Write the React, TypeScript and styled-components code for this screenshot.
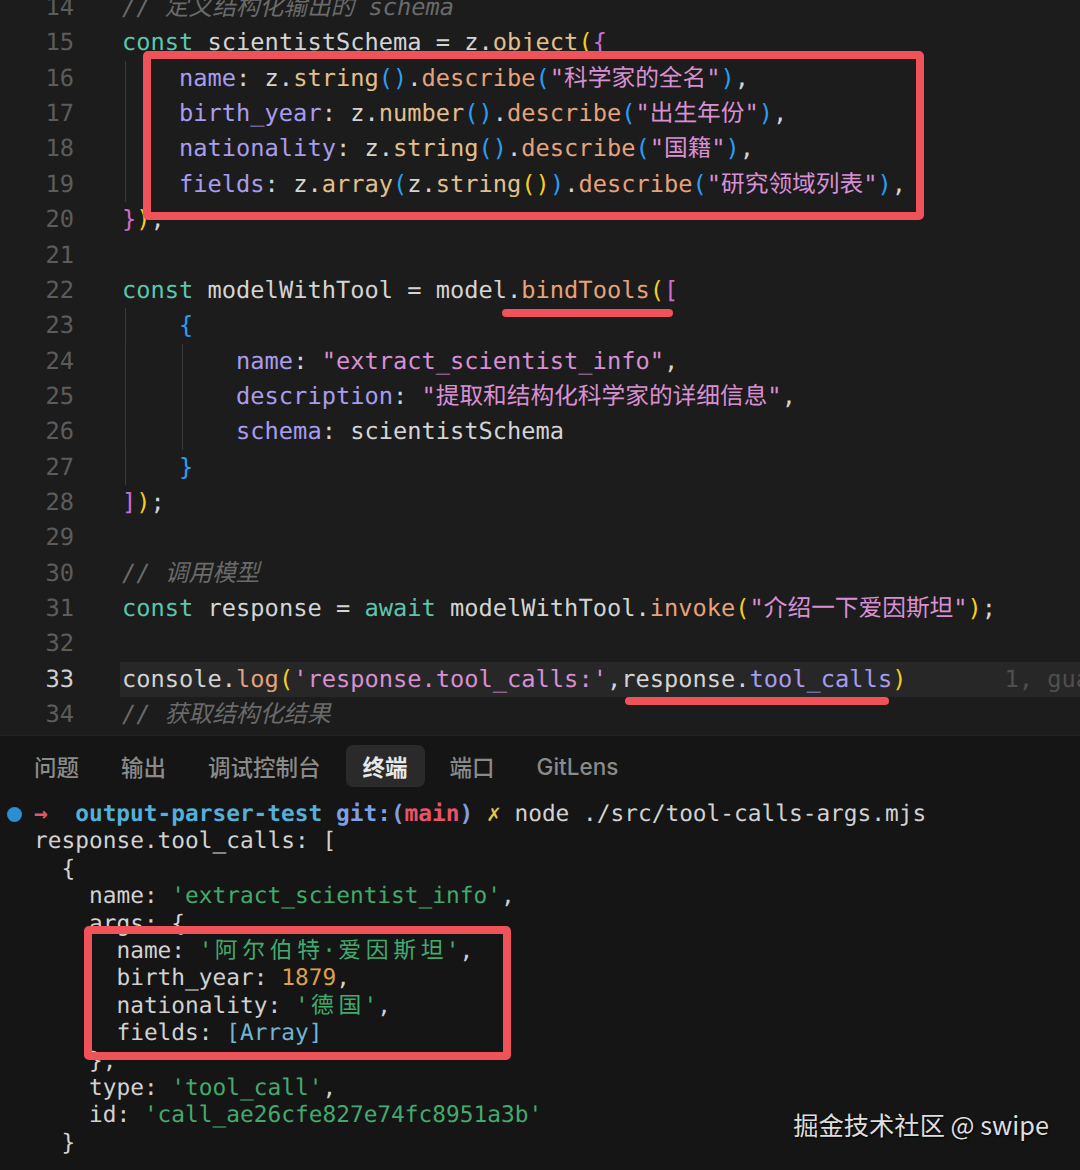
import React from "react";
import styled, { createGlobalStyle } from "styled-components";

const GlobalStyle = createGlobalStyle`
  html, body {
    margin: 0;
    padding: 0;
    background: #151515;
  }
`;

const palette: Record<string, string> = {
  kw: "#5cc6ad",
  pl: "#d4d4d4",
  pr: "#a89cee",
  fy: "#e2c08c",
  fo: "#e6a27b",
  st: "#d98fd3",
  cm: "#6a6a6a",
  y: "#f5cf1d",
  m: "#cf6bd0",
  b: "#289ff5",
  tx: "#d2d2d2",
  gr: "#43aa6d",
  nu: "#dda04b",
  cy: "#72b5d4",
  cyb: "#55afd6",
  bl: "#7e9fe4",
  rd: "#e5556a",
  ye: "#e3c44c",
};

const Screen = styled.div`
  position: relative;
  width: 1080px;
  height: 1170px;
  overflow: hidden;
  display: flex;
  flex-direction: column;
  background: #151515;
`;

const Editor = styled.div`
  flex: none;
  height: 735px;
  overflow: hidden;
  background: #1c1c1c;
  font-family: "DejaVu Sans Mono", "Noto Sans CJK SC", monospace;
  font-size: 23.7px;
  text-rendering: geometricPrecision;
`;

const Lines = styled.div`
  margin-top: -10px;
`;

const Row = styled.div`
  display: flex;
  height: 35.37px;
  line-height: 35.37px;
  white-space: pre;
`;

const LineNo = styled.span<{ $active?: boolean }>`
  flex: none;
  width: 74px;
  text-align: right;
  color: ${(p) => (p.$active ? "#cfcfcf" : "#5c5c5c")};
`;

const Code = styled.div<{ $active?: boolean }>`
  flex: 1;
  margin-left: 46px;
  padding-left: 2px;
  overflow: hidden;
  background: ${(p) => (p.$active ? "#272727" : "transparent")};
`;

const Indent = styled.span<{ $level: number }>`
  display: inline-block;
  vertical-align: top;
  width: ${(p) => p.$level * 4}ch;
  height: 100%;
  background-image: linear-gradient(
    to right,
    transparent 3px,
    #3a3a3a 3px,
    #3a3a3a 4px,
    transparent 4px
  );
  background-size: 4ch 100%;
  background-repeat: repeat-x;
`;

const Tok = styled.span<{ $c: string; $i?: boolean; $b?: boolean }>`
  color: ${(p) => palette[p.$c]};
  font-style: ${(p) => (p.$i ? "italic" : "normal")};
  font-weight: ${(p) => (p.$b ? 700 : 400)};
`;

const Ghost = styled.span`
  margin-left: 98px;
  color: #4f4f4f;
`;

const Panel = styled.div`
  flex: 1;
  display: flex;
  flex-direction: column;
  background: #151515;
  border-top: 1px solid #222;
`;

const TabBar = styled.div`
  display: flex;
  gap: 8px;
  padding: 9px 0 0 17px;
  font-family: Inter, "Noto Sans CJK SC", sans-serif;
  font-size: 22.5px;
`;

const Tab = styled.div<{ $active?: boolean }>`
  height: 42px;
  display: flex;
  align-items: center;
  padding: 0 17px;
  border-radius: 7px;
  color: ${(p) => (p.$active ? "#e8e8e8" : "#8a8a8a")};
  font-weight: ${(p) => (p.$active ? 600 : 500)};
  background: ${(p) => (p.$active ? "#2a2a2a" : "transparent")};
`;

const Term = styled.div`
  padding-top: 14px;
  font-family: "DejaVu Sans Mono", "Noto Sans CJK SC", monospace;
  font-size: 22.8px;
  color: #d2d2d2;
  text-rendering: geometricPrecision;
`;

const TermRow = styled.div`
  display: flex;
  align-items: center;
  height: 27.4px;
  line-height: 27.4px;
  white-space: pre;
`;

const Mark = styled.span`
  flex: none;
  width: 34px;
  display: flex;
  align-items: center;
`;

const Dot = styled.span`
  width: 15px;
  height: 15px;
  margin-left: 7px;
  border-radius: 50%;
  background: #2d8dd2;
`;

const Wide = styled.span`
  display: inline-block;
  width: 2ch;
  text-align: center;
`;

const Frame = styled.div<{ $x: number; $y: number; $w: number; $h: number }>`
  position: absolute;
  left: ${(p) => p.$x}px;
  top: ${(p) => p.$y}px;
  width: ${(p) => p.$w}px;
  height: ${(p) => p.$h}px;
  box-sizing: border-box;
  border: 8px solid #ef5359;
  border-radius: 5px;
  pointer-events: none;
`;

const Stroke = styled.div<{ $x: number; $y: number; $w: number }>`
  position: absolute;
  left: ${(p) => p.$x}px;
  top: ${(p) => p.$y}px;
  width: ${(p) => p.$w}px;
  height: 8px;
  border-radius: 4px;
  background: #ef5359;
`;

const Watermark = styled.div`
  position: absolute;
  right: 31px;
  top: 1107px;
  font-family: "Noto Sans CJK SC", sans-serif;
  font-size: 25.3px;
  line-height: 34px;
  color: #dedede;
  text-shadow: 1px 1px 2px rgba(0, 0, 0, 0.9);
`;

type T = [string, string];
type Line = { n: number; ind?: number; t: T[]; active?: boolean; ghost?: string };

const code: Line[] = [
  { n: 14, t: [["// 定义结构化输出的 schema", "cm"]] },
  { n: 15, t: [["const", "kw"], [" scientistSchema = z.", "pl"], ["object", "fy"], ["(", "y"], ["{", "m"]] },
  {
    n: 16, ind: 1,
    t: [["name", "pr"], [": z.", "pl"], ["string", "fy"], ["()", "b"], [".", "pl"], ["describe", "fo"], ["(", "b"], ['"科学家的全名"', "st"], [")", "b"], [",", "pl"]],
  },
  {
    n: 17, ind: 1,
    t: [["birth_year", "pr"], [": z.", "pl"], ["number", "fy"], ["()", "b"], [".", "pl"], ["describe", "fo"], ["(", "b"], ['"出生年份"', "st"], [")", "b"], [",", "pl"]],
  },
  {
    n: 18, ind: 1,
    t: [["nationality", "pr"], [": z.", "pl"], ["string", "fy"], ["()", "b"], [".", "pl"], ["describe", "fo"], ["(", "b"], ['"国籍"', "st"], [")", "b"], [",", "pl"]],
  },
  {
    n: 19, ind: 1,
    t: [["fields", "pr"], [": z.", "pl"], ["array", "fy"], ["(", "b"], ["z.", "pl"], ["string", "fy"], ["()", "y"], [")", "b"], [".", "pl"], ["describe", "fo"], ["(", "b"], ['"研究领域列表"', "st"], [")", "b"], [",", "pl"]],
  },
  { n: 20, t: [["}", "m"], [")", "y"], [";", "pl"]] },
  { n: 21, t: [] },
  {
    n: 22,
    t: [["const", "kw"], [" modelWithTool = model.", "pl"], ["bindTools", "fo"], ["(", "y"], ["[", "m"]],
  },
  { n: 23, ind: 1, t: [["{", "b"]] },
  { n: 24, ind: 2, t: [["name", "pr"], [": ", "pl"], ['"extract_scientist_info"', "st"], [",", "pl"]] },
  { n: 25, ind: 2, t: [["description", "pr"], [": ", "pl"], ['"提取和结构化科学家的详细信息"', "st"], [",", "pl"]] },
  { n: 26, ind: 2, t: [["schema", "pr"], [": scientistSchema", "pl"]] },
  { n: 27, ind: 1, t: [["}", "b"]] },
  { n: 28, t: [["]", "m"], [")", "y"], [";", "pl"]] },
  { n: 29, t: [] },
  { n: 30, t: [["// 调用模型", "cm"]] },
  {
    n: 31,
    t: [["const", "kw"], [" response = ", "pl"], ["await", "kw"], [" modelWithTool.", "pl"], ["invoke", "fo"], ["(", "y"], ['"介绍一下爱因斯坦"', "st"], [")", "y"], [";", "pl"]],
  },
  { n: 32, t: [] },
  {
    n: 33, active: true, ghost: "1, guang (你), 2 分钟前 • Uncommitted changes",
    t: [["console.", "pl"], ["log", "fo"], ["(", "y"], ["'response.tool_calls:'", "st"], [",response.", "pl"], ["tool_calls", "pr"], [")", "y"]],
  },
  { n: 34, t: [["// 获取结构化结果", "cm"]] },
];

const wide = (s: string) =>
  Array.from(s).map((ch, i) =>
    ch.charCodeAt(0) > 0x2e80 ? <Wide key={i}>{ch}</Wide> : ch
  );

const term: T[][] = [
  [["response.tool_calls: [", "tx"]],
  [["  {", "tx"]],
  [["    name: ", "tx"], ["'extract_scientist_info'", "gr"], [",", "tx"]],
  [["    args: {", "tx"]],
  [["      name: ", "tx"], ["'阿尔伯特·爱因斯坦'", "gr"], [",", "tx"]],
  [["      birth_year: ", "tx"], ["1879", "nu"], [",", "tx"]],
  [["      nationality: ", "tx"], ["'德国'", "gr"], [",", "tx"]],
  [["      fields: ", "tx"], ["[Array]", "cy"]],
  [["    },", "tx"]],
  [["    type: ", "tx"], ["'tool_call'", "gr"], [",", "tx"]],
  [["    id: ", "tx"], ["'call_ae26cfe827e74fc8951a3b'", "gr"]],
  [["  }", "tx"]],
];

const tabs = ["问题", "输出", "调试控制台", "终端", "端口", "GitLens"];

export default function App() {
  return (
    <>
      <GlobalStyle />
      <Screen>
        <Editor>
          <Lines>
            {code.map((l) => (
              <Row key={l.n}>
                <LineNo $active={l.active}>{l.n}</LineNo>
                <Code $active={l.active}>
                  {l.ind ? <Indent $level={l.ind} /> : null}
                  {l.t.map(([s, c], i) => (
                    <Tok key={i} $c={c} $i={c === "cm"}>
                      {s}
                    </Tok>
                  ))}
                  {l.ghost && <Ghost>{l.ghost}</Ghost>}
                </Code>
              </Row>
            ))}
          </Lines>
        </Editor>

        <Panel>
          <TabBar>
            {tabs.map((t) => (
              <Tab key={t} $active={t === "终端"}>
                {t}
              </Tab>
            ))}
          </TabBar>
          <Term>
            <TermRow>
              <Mark>
                <Dot />
              </Mark>
              <Tok $c="rd" $b>→</Tok>
              <Tok $c="tx">{"  "}</Tok>
              <Tok $c="cyb" $b>output-parser-test</Tok>
              <Tok $c="tx"> </Tok>
              <Tok $c="bl" $b>git:(</Tok>
              <Tok $c="rd" $b>main</Tok>
              <Tok $c="bl" $b>)</Tok>
              <Tok $c="tx"> </Tok>
              <Tok $c="ye" $b>✗</Tok>
              <Tok $c="tx"> node ./src/tool-calls-args.mjs</Tok>
            </TermRow>
            {term.map((row, r) => (
              <TermRow key={r}>
                <Mark />
                {row.map(([s, c], i) => (
                  <Tok key={i} $c={c}>
                    {wide(s)}
                  </Tok>
                ))}
              </TermRow>
            ))}
          </Term>
        </Panel>

        <Frame $x={143} $y={51} $w={781} $h={169} />
        <Stroke $x={502} $y={309} $w={171} />
        <Stroke $x={625} $y={697} $w={264} />
        <Frame $x={84} $y={926} $w={427} $h={134} />

        <Watermark>掘金技术社区 @ swipe</Watermark>
      </Screen>
    </>
  );
}
